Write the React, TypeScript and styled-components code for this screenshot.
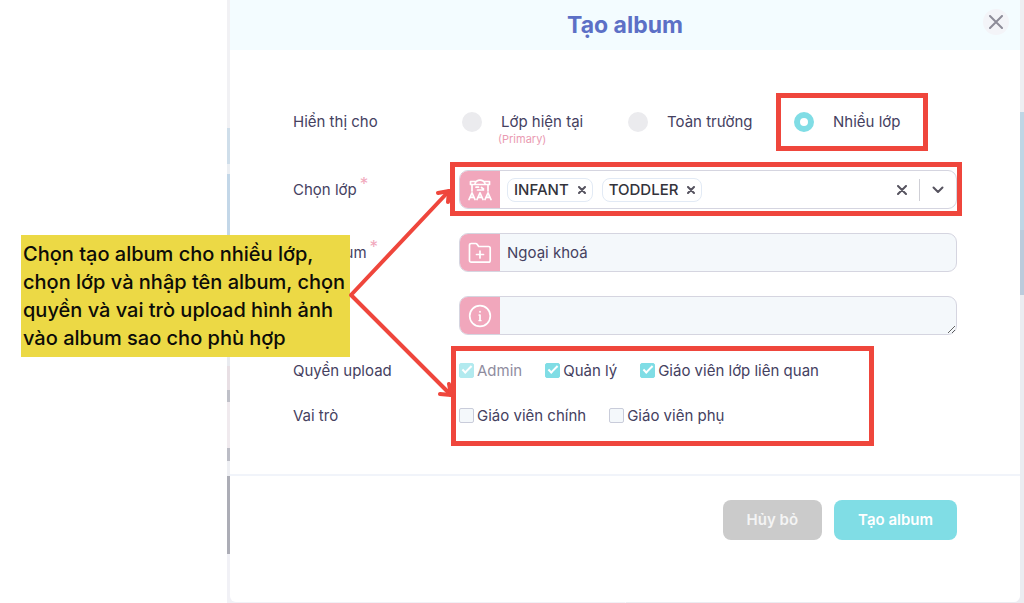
import React, { useState } from "react";
import styled, { createGlobalStyle, css } from "styled-components";

const color = {
  ink: "#45415f",
  title: "#5c70c6",
  pink: "#f1a7bc",
  teal: "#80dde5",
  field: "#f4f8fb",
  border: "#d5d5e0",
  line: "#f1f4fa",
  red: "#ef463c",
  note: "#ecd945",
};

const GlobalStyle = createGlobalStyle`
  *, *::before, *::after { box-sizing: border-box; }
  body {
    margin: 0;
    background: #fff;
    color: ${color.ink};
    font-family: Inter, "Noto Sans", sans-serif;
    font-size: 15px;
    line-height: 20px;
  }
  button, input, textarea { font: inherit; color: inherit; }
  button { padding: 0; border: 0; background: none; cursor: pointer; }
`;

const Stage = styled.main`
  position: relative;
  display: flex;
  min-height: 100vh;
  padding-left: 227px;
`;

const Backdrop = styled.div`
  display: flex;
  flex: 1;
  padding: 0 4px 1px 3px;
  background:
    linear-gradient(
        #f1f1f4 0 128px, #cfdeea 128px 164px, #eceff3 164px 174px, #c3d7e8 174px 290px,
        #e9ebf0 290px 366px, #e8dfe4 366px 390px, #bfc0c8 390px 402px, #f0eaee 402px 448px,
        #bcbdc6 448px 461px, #eeeff3 461px 476px, #acadb6 476px 554px, #f1f1f6 554px
      )
      left / 50% 100% no-repeat,
    linear-gradient(#eeeef2 0 112px, #bfd6e5 112px 230px, #bccbdc 230px 295px, #ebecf1 295px) right /
      50% 100% no-repeat;
`;

const Dialog = styled.section`
  display: flex;
  flex: 1;
  flex-direction: column;
  background: #fff;
  border-radius: 0 0 6px 6px;
`;

const Header = styled.header`
  display: grid;
  grid-template-columns: 50px 1fr 50px;
  align-items: center;
  height: 50px;
  background: #f3fcff;
`;

const Title = styled.h1`
  grid-column: 2;
  margin: 0;
  color: ${color.title};
  font-size: 23px;
  font-weight: 700;
  line-height: 32px;
  text-align: center;
`;

const CloseButton = styled.button`
  display: grid;
  place-items: center;
  justify-self: end;
  width: 26px;
  height: 26px;
  margin: 0 11px 6px 0;
  border-radius: 50%;
  background: #f3f4f8;
  color: #8d8c99;
`;

const Form = styled.form`
  display: flex;
  flex: 1;
  flex-direction: column;
`;

const Body = styled.div`
  display: flex;
  flex-direction: column;
  gap: 24px;
  padding: 60px 63px 46px;
`;

const Row = styled.div<{ $top?: boolean }>`
  display: grid;
  grid-template-columns: 166px minmax(0, 1fr);
  align-items: ${(p) => (p.$top ? "start" : "center")};
`;

const labelText = css`
  line-height: 24px;
`;

const FieldLabel = styled.label`
  ${labelText}
`;

const GroupLabel = styled.span`
  ${labelText}
`;

const Required = styled.sup`
  margin-left: 3px;
  color: ${color.pink};
  font-size: 17px;
  line-height: 0;
  vertical-align: 5px;
`;

const RadioGroup = styled.div`
  display: grid;
  grid-template-columns: repeat(3, 166px);
  padding-left: 3px;
`;

const RadioOption = styled.label`
  position: relative;
  display: grid;
  grid-template-columns: 20px 1fr;
  column-gap: 19px;
  align-items: center;
  align-content: start;
  line-height: 24px;
`;

const Radio = styled.input`
  appearance: none;
  width: 20px;
  height: 20px;
  margin: 0;
  border-radius: 50%;
  background: #ebebee;

  &:checked {
    border: 6px solid ${color.teal};
    background: #fff;
  }
`;

const RadioHint = styled.small`
  grid-column: 2;
  margin-left: -3px;
  height: 12px;
  color: #ea9bb2;
  font-size: 11px;
  line-height: 10px;
`;

const frame = css`
  position: absolute;
  border: 5px solid ${color.red};
  pointer-events: none;
`;

const OptionFrame = styled.span`
  ${frame}
  top: -17px;
  left: -18px;
  width: 152px;
  height: 58px;
`;

const SelectFrame = styled.span`
  ${frame}
  inset: -9px -6px -8px -10px;
`;

const UploadFrame = styled.span`
  ${frame}
  top: -13px;
  bottom: -18px;
  left: 158px;
  width: 423px;
`;

const FieldBox = styled.div<{ $plain?: boolean }>`
  position: relative;
  display: flex;
  height: 39px;
  border: 1px solid ${color.border};
  border-radius: 9px;
  background: ${(p) => (p.$plain ? "#fff" : color.field)};
`;

const FieldIcon = styled.span`
  display: grid;
  place-items: center;
  flex: none;
  width: 40px;
  border-radius: 8px 0 0 8px;
  background: ${color.pink};
  color: #fff;
`;

const textControl = css`
  flex: 1;
  min-width: 0;
  padding: 8px 7px;
  border: 0;
  border-radius: 0 8px 8px 0;
  outline: 0;
  background: transparent;
`;

const TextInput = styled.input`
  ${textControl}
`;

const TextArea = styled.textarea`
  ${textControl}
  resize: vertical;
`;

const TagList = styled.div`
  display: flex;
  flex: 1;
  align-items: center;
  gap: 9px;
  padding-left: 7px;
`;

const Tag = styled.span`
  display: flex;
  align-items: center;
  gap: 9px;
  height: 24px;
  padding: 0 6px;
  border: 1px solid #e2eaf5;
  border-radius: 8px;
  color: #33333b;
  font-weight: 500;
`;

const IconButton = styled.button`
  display: grid;
  place-items: center;
  color: #56535f;
`;

const SelectTools = styled.div`
  display: flex;
  align-items: center;
  gap: 12px;
  padding-right: 12px;
`;

const Divider = styled.span`
  width: 1px;
  height: 22px;
  background: #cfcfd6;
`;

const UploadSection = styled.div`
  position: relative;
  display: flex;
  flex-direction: column;
  gap: 21px;
`;

const CheckGroup = styled.div`
  display: flex;
  gap: 23px;
`;

const CheckOption = styled.label<{ $muted?: boolean }>`
  display: flex;
  align-items: center;
  gap: 3px;
  line-height: 24px;
  opacity: ${(p) => (p.$muted ? 0.6 : 1)};
`;

const Checkbox = styled.input`
  appearance: none;
  display: grid;
  place-items: center;
  width: 15px;
  height: 15px;
  margin: 0 0 2px;
  border: 1px solid #c9ccda;
  border-radius: 2px;
  background: ${color.field};

  &:checked {
    border-color: ${color.teal};
    background: ${color.teal};
  }

  &:checked::before {
    content: "";
    width: 10px;
    height: 5px;
    margin-bottom: 3px;
    border: solid #fff;
    border-width: 0 0 2px 2px;
    transform: rotate(-45deg);
  }
`;

const Footer = styled.footer`
  display: flex;
  justify-content: flex-end;
  gap: 12px;
  padding: 24px 63px;
  border-top: 2px solid ${color.line};
`;

const ActionButton = styled.button<{ $primary?: boolean }>`
  height: 40px;
  padding: 0 24px;
  border-radius: 8px;
  background: ${(p) => (p.$primary ? color.teal : "#cbcbcb")};
  color: ${(p) => (p.$primary ? "#fff" : "#f4f4f4")};
  font-weight: 600;
`;

const Note = styled.aside`
  position: absolute;
  top: 235px;
  left: 21px;
  width: 329px;
  padding: 5px 0 5px 2px;
  background: ${color.note};
  color: #0c0c08;
  font-size: 20px;
  font-weight: 500;
  line-height: 28px;
  white-space: nowrap;
`;

const Arrows = styled.svg`
  position: absolute;
  top: 180px;
  left: 340px;
  width: 120px;
  height: 230px;
  pointer-events: none;
`;

const strokeProps = {
  fill: "none",
  stroke: "currentColor",
  strokeLinecap: "round" as const,
  strokeLinejoin: "round" as const,
};

const Cross = ({ size, weight }: { size: number; weight: number }) => (
  <svg width={size} height={size} viewBox={`0 0 ${size} ${size}`} {...strokeProps} strokeWidth={weight}>
    <path d={`M1 1 ${size - 1} ${size - 1}M${size - 1} 1 1 ${size - 1}`} />
  </svg>
);

const Chevron = () => (
  <svg width="12" height="8" viewBox="0 0 12 8" {...strokeProps} strokeWidth="2">
    <path d="M1.5 1.5 6 6l4.500-4.500" />
  </svg>
);

const ClassIcon = () => (
  <svg width="26" height="22" viewBox="0 0 26 22" {...strokeProps} strokeWidth="1.700">
    <path d="M3.500 2.500h5M17.500 2.500h5M3.500 2.500v3h19v-3M5 5.500v6.500M21 5.500v6.500M8 4.500C9 2 10.500 1.200 13 1.200s4 .8 5 3.300" />
    <path d="M9 8.200h2.500M10.500 11h6M14.500 8.500l2 1.500" />
    <path d="M2 20.500 5 13.800l3 6.700M3.200 18.300h3.600M10 20.500l3-6.700 3 6.700M11.200 18.300h3.600M18 20.500l3-6.700 3 6.700M19.200 18.300h3.600" />
  </svg>
);

const FolderIcon = () => (
  <svg width="24" height="22" viewBox="0 0 24 22" {...strokeProps} strokeWidth="1.700">
    <path d="M1.500 3.200c0-1 .7-1.700 1.700-1.700h4.600c.6 0 1 .2 1.300.7l1.600 2.300h9.800c1 0 1.700.7 1.700 1.700v12.300c0 1-.7 1.700-1.700 1.700H3.200c-1 0-1.700-.7-1.700-1.700z" />
    <path d="M12 9v7M8.500 12.500h7" />
  </svg>
);

const InfoIcon = () => (
  <svg width="24" height="24" viewBox="0 0 24 24" {...strokeProps} strokeWidth="1.700">
    <circle cx="12" cy="12" r="10.300" />
    <path d="M11.200 11H12v5.500M11.200 16.500h1.600M12 7.500v.4" />
  </svg>
);

const audiences = [
  { id: "current", label: "Lớp hiện tại", hint: "(Primary)" },
  { id: "school", label: "Toàn trường" },
  { id: "many", label: "Nhiều lớp", framed: true },
];

export default function App() {
  const [audience, setAudience] = useState("many");
  const [classes, setClasses] = useState(["INFANT", "TODDLER"]);

  return (
    <>
      <GlobalStyle />
      <Stage>
        <Backdrop>
          <Dialog role="dialog" aria-labelledby="dialog-title">
            <Header>
              <Title id="dialog-title">Tạo album</Title>
              <CloseButton type="button" aria-label="Đóng">
                <Cross size={14} weight={2} />
              </CloseButton>
            </Header>
            <Form onSubmit={(e) => e.preventDefault()}>
              <Body>
                <Row $top>
                  <GroupLabel id="audience-label">Hiển thị cho</GroupLabel>
                  <RadioGroup role="radiogroup" aria-labelledby="audience-label">
                    {audiences.map((a) => (
                      <RadioOption key={a.id}>
                        <Radio
                          type="radio"
                          name="audience"
                          checked={audience === a.id}
                          onChange={() => setAudience(a.id)}
                        />
                        <span>{a.label}</span>
                        {a.hint && <RadioHint>{a.hint}</RadioHint>}
                        {a.framed && <OptionFrame />}
                      </RadioOption>
                    ))}
                  </RadioGroup>
                </Row>

                <Row>
                  <GroupLabel id="classes-label">
                    Chọn lớp<Required>*</Required>
                  </GroupLabel>
                  <FieldBox $plain role="group" aria-labelledby="classes-label">
                    <FieldIcon>
                      <ClassIcon />
                    </FieldIcon>
                    <TagList>
                      {classes.map((c) => (
                        <Tag key={c}>
                          {c}
                          <IconButton
                            type="button"
                            aria-label={`Xóa ${c}`}
                            onClick={() => setClasses(classes.filter((x) => x !== c))}
                          >
                            <Cross size={8} weight={2} />
                          </IconButton>
                        </Tag>
                      ))}
                    </TagList>
                    <SelectTools>
                      <IconButton type="button" aria-label="Xóa tất cả" onClick={() => setClasses([])}>
                        <Cross size={10} weight={2} />
                      </IconButton>
                      <Divider />
                      <IconButton type="button" aria-label="Mở danh sách lớp">
                        <Chevron />
                      </IconButton>
                    </SelectTools>
                    <SelectFrame />
                  </FieldBox>
                </Row>

                <Row>
                  <FieldLabel htmlFor="album-name">
                    Tên album<Required>*</Required>
                  </FieldLabel>
                  <FieldBox>
                    <FieldIcon>
                      <FolderIcon />
                    </FieldIcon>
                    <TextInput id="album-name" defaultValue="Ngoại khoá" />
                  </FieldBox>
                </Row>

                <Row>
                  <span />
                  <FieldBox>
                    <FieldIcon>
                      <InfoIcon />
                    </FieldIcon>
                    <TextArea aria-label="Mô tả" rows={1} />
                  </FieldBox>
                </Row>

                <UploadSection>
                  <Row>
                    <GroupLabel id="upload-label">Quyền upload</GroupLabel>
                    <CheckGroup role="group" aria-labelledby="upload-label">
                      <CheckOption $muted>
                        <Checkbox type="checkbox" defaultChecked disabled />
                        Admin
                      </CheckOption>
                      <CheckOption>
                        <Checkbox type="checkbox" defaultChecked />
                        Quản lý
                      </CheckOption>
                      <CheckOption>
                        <Checkbox type="checkbox" defaultChecked />
                        Giáo viên lớp liên quan
                      </CheckOption>
                    </CheckGroup>
                  </Row>
                  <Row>
                    <GroupLabel id="role-label">Vai trò</GroupLabel>
                    <CheckGroup role="group" aria-labelledby="role-label">
                      <CheckOption>
                        <Checkbox type="checkbox" />
                        Giáo viên chính
                      </CheckOption>
                      <CheckOption>
                        <Checkbox type="checkbox" />
                        Giáo viên phụ
                      </CheckOption>
                    </CheckGroup>
                  </Row>
                  <UploadFrame />
                </UploadSection>
              </Body>
              <Footer>
                <ActionButton type="button">Hủy bỏ</ActionButton>
                <ActionButton type="submit" $primary>
                  Tạo album
                </ActionButton>
              </Footer>
            </Form>
          </Dialog>
        </Backdrop>

        <Note>
          Chọn tạo album cho nhiều lớp,
          <br />
          chọn lớp và nhập tên album, chọn
          <br />
          quyền và vai trò upload hình ảnh
          <br />
          vào album sao cho phù hợp
        </Note>
        <Arrows viewBox="0 0 120 230" fill="none" stroke={color.red} strokeWidth="4" strokeLinecap="round" strokeLinejoin="round" aria-hidden="true">
          <path d="M109 11 11 115 111 215" />
          <path d="M98 13 109 11 108 22M100 214l11 1-2-11" />
        </Arrows>
      </Stage>
    </>
  );
}
